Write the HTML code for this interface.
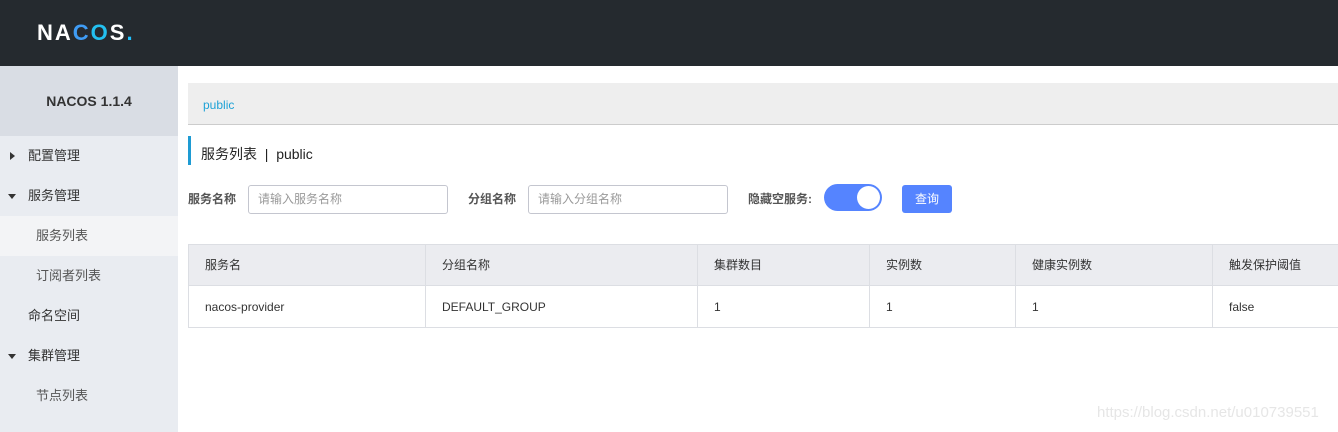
<!DOCTYPE html>
<html><head><meta charset="utf-8"><style>
*{margin:0;padding:0;box-sizing:border-box}
body{width:1338px;height:432px;overflow:hidden;position:relative;background:#fff;font-family:"Liberation Sans","Noto Sans CJK SC",sans-serif;font-size:12px;color:#333}
.a{position:absolute}
.hd{left:0;top:0;width:1338px;height:66px;background:#252a2f}
.sb{left:0;top:66px;width:178px;height:366px;background:#e9ecf1}
.ver{left:0;top:66px;width:178px;height:70px;background:#d9dde4;text-align:center;line-height:70px;font-weight:bold;font-size:14px;color:#333}
.mi{left:0;width:178px;height:40px;line-height:40px;font-size:13px;color:#333}
.tri{position:absolute;left:10px;top:16px;width:0;height:0}
.r{border-top:4px solid transparent;border-bottom:4px solid transparent;border-left:5px solid #333}
.d{top:18px;left:8px;border-left:4.5px solid transparent;border-right:4.5px solid transparent;border-top:5px solid #333}
.inp{height:29px;border:1px solid #c4c6cf;border-radius:3px;color:#999;font-size:12px;line-height:27px;padding-left:9px;top:185px}
.lbl{top:185px;line-height:29px;font-weight:bold;color:#555;font-size:12px}
.th{top:244px;height:42px;background:#ebecf0;border-top:1px solid #dcdee3;border-bottom:1px solid #dcdee3}
.c{position:absolute;line-height:42px;font-size:12px;color:#333}
.v{position:absolute;top:244px;width:1px;height:84px;background:#dcdee3}
</style></head><body>
<div class="a hd"></div>
<div class="a" style="left:37px;top:19px;font-size:22px;font-weight:bold;color:#fff;letter-spacing:2px;line-height:28px">NA<span style="color:#3f9cf5">C</span><span style="color:#23c0f0">O</span>S<span style="color:#1fc2ff">.</span></div>
<div class="a sb"></div>
<div class="a ver">NACOS 1.1.4</div>
<div class="a mi" style="top:136px"><span class="tri r"></span><span style="margin-left:28px">配置管理</span></div>
<div class="a mi" style="top:176px"><span class="tri d"></span><span style="margin-left:28px">服务管理</span></div>
<div class="a mi" style="top:216px;background:#f3f4f6"><span style="margin-left:36px;color:#555">服务列表</span></div>
<div class="a mi" style="top:256px"><span style="margin-left:36px;color:#555">订阅者列表</span></div>
<div class="a mi" style="top:296px"><span style="margin-left:28px">命名空间</span></div>
<div class="a mi" style="top:336px"><span class="tri d"></span><span style="margin-left:28px">集群管理</span></div>
<div class="a mi" style="top:376px"><span style="margin-left:36px;color:#555">节点列表</span></div>

<div class="a" style="left:188px;top:83px;width:1150px;height:42px;background:#eeeeee;border-bottom:1px solid #ccc;line-height:44px;padding-left:15px;color:#1ea2d6;font-size:12px">public</div>
<div class="a" style="left:188px;top:136px;width:3px;height:29px;background:#1e9bd3"></div>
<div class="a" style="left:201px;top:136px;line-height:36px;font-size:14px;color:#222">服务列表 &nbsp;| &nbsp;public</div>

<div class="a lbl" style="left:188px">服务名称</div>
<div class="a inp" style="left:248px;width:200px">请输入服务名称</div>
<div class="a lbl" style="left:468px">分组名称</div>
<div class="a inp" style="left:528px;width:200px">请输入分组名称</div>
<div class="a lbl" style="left:748px">隐藏空服务:</div>
<div class="a" style="left:824px;top:184px;width:58px;height:27px;border-radius:14px;background:#5584ff"><div style="position:absolute;right:2px;top:2px;width:23px;height:23px;border-radius:50%;background:#fff"></div></div>
<div class="a" style="left:902px;top:185px;width:50px;height:28px;border-radius:3px;background:#5584ff;color:#fff;text-align:center;line-height:28px;font-size:12px">查询</div>

<div class="a th" style="left:188px;width:1150px"></div>
<div class="a" style="left:188px;top:327px;width:1150px;height:1px;background:#dcdee3"></div>
<div class="v" style="left:188px"></div>
<div class="v" style="left:425px"></div>
<div class="v" style="left:697px"></div>
<div class="v" style="left:869px"></div>
<div class="v" style="left:1015px"></div>
<div class="v" style="left:1212px"></div>
<div class="c" style="left:205px;top:244px">服务名</div>
<div class="c" style="left:442px;top:244px">分组名称</div>
<div class="c" style="left:714px;top:244px">集群数目</div>
<div class="c" style="left:886px;top:244px">实例数</div>
<div class="c" style="left:1032px;top:244px">健康实例数</div>
<div class="c" style="left:1229px;top:244px">触发保护阈值</div>
<div class="c" style="left:205px;top:286px">nacos-provider</div>
<div class="c" style="left:442px;top:286px">DEFAULT_GROUP</div>
<div class="c" style="left:714px;top:286px">1</div>
<div class="c" style="left:886px;top:286px">1</div>
<div class="c" style="left:1032px;top:286px">1</div>
<div class="c" style="left:1229px;top:286px">false</div>
<div class="a" style="left:1097px;top:404px;font-size:15px;color:#e6e6e6">https://blog.csdn.net/u010739551</div>
</body></html>
